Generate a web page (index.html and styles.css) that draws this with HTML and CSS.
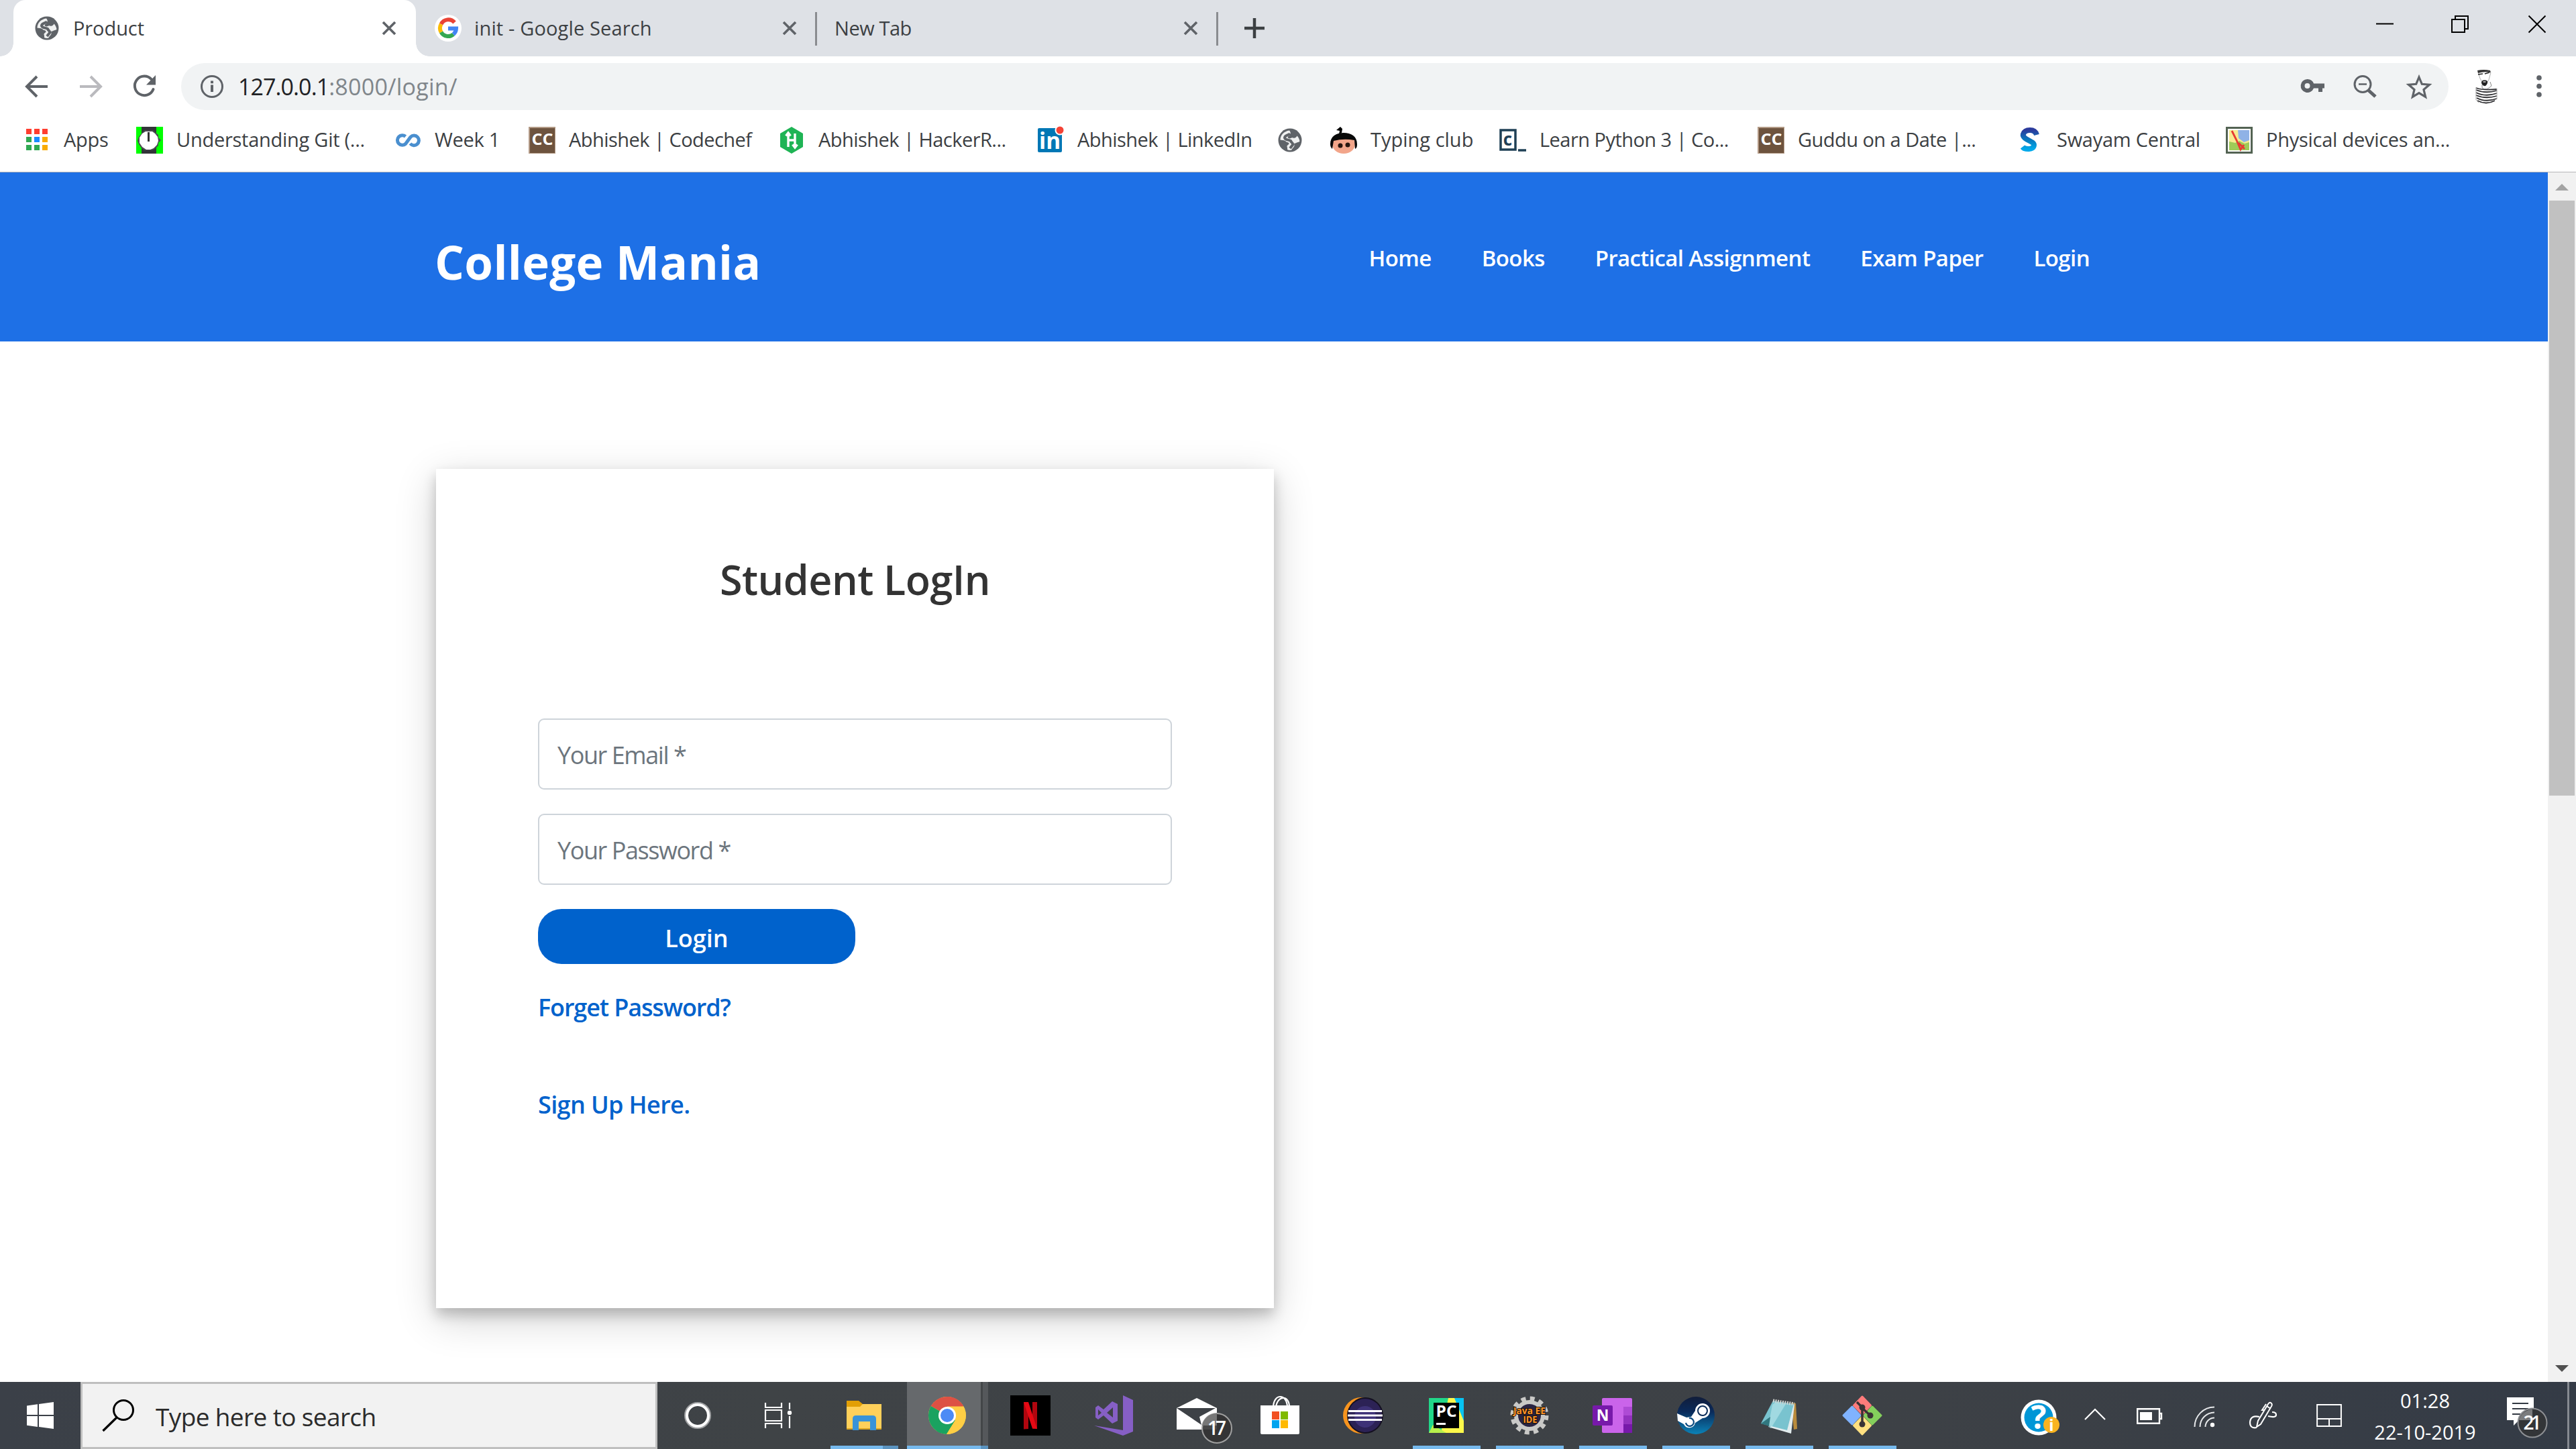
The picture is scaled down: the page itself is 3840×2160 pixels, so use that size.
FILE: index.html
```html
<!DOCTYPE html>
<html lang="en">
<head>
<meta charset="utf-8">
<title>Product</title>
<link rel="stylesheet" href="styles.css">
</head>
<body>
<svg class="defs" width="0" height="0" aria-hidden="true">
  <defs>
    <symbol id="globe" viewBox="0 0 36 36">
      <circle cx="18" cy="18" r="17.500" fill="#5f6368"/>
      <path d="M17 3.500c-8 1-13.500 7-13.500 14 3 1 6 0 8 2 1 2 4 1 5 3 0 3-3 2-3 5 1 2 0 4 1 5 2 .5 5 .5 6 0 1-3 4-4 4-7-1-3 0-3 2-3 2-2 5-1 6-3-1-4-2-6-4-8-1 2-3 4-6 3-2-1-4 1-5 1-3 0-4-3-1-4 3-2 3-5 .500-8z" fill="#fff" fill-opacity=".9"/>
      <path d="M18 8c-2 3-7 2-8 6 0 4 6 3 9 5 1 3 4 3 3 6l-4 5" fill="none" stroke="#5f6368" stroke-width="4"/>
    </symbol>
    <symbol id="cross" viewBox="0 0 24 24"><path d="M3 3l18 18M21 3L3 21" stroke="#5f6368" stroke-width="3.600" fill="none"/></symbol>
    <symbol id="cc" viewBox="0 0 40 40">
      <rect width="40" height="40" fill="#b39a86"/><rect x="2" y="2" width="37" height="37" fill="#6d533e"/>
      <text x="20.500" y="27" text-anchor="middle" font-size="24" font-weight="700" textLength="32" lengthAdjust="spacingAndGlyphs" fill="#fff">CC</text>
    </symbol>
  </defs>
</svg>

<header class="tabs">
  <div class="tab tab-active">
    <svg class="fav" width="36" height="36"><use href="#globe"/></svg>
    <span class="tab-title">Product</span>
    <svg class="close" width="24" height="24"><use href="#cross"/></svg>
  </div>
  <div class="tab tab-google">
    <svg class="fav" width="40" height="40" viewBox="0 0 40 40"><circle cx="20" cy="20" r="20" fill="#fff"/>
      <g fill="none" stroke-width="6"><path d="M29.500 11.500A12 12 0 0 0 9.600 14" stroke="#ea4335"/><path d="M9.600 14a12 12 0 0 0 0 12" stroke="#fbbc05"/><path d="M9.600 26a12 12 0 0 0 18.200 3.200" stroke="#34a853"/><path d="M27.800 29.200A12 12 0 0 0 32 20.500H20" stroke="#4285f4"/></g></svg>
    <span class="tab-title">init - Google Search</span>
    <svg class="close" width="24" height="24"><use href="#cross"/></svg>
  </div>
  <div class="tab tab-new">
    <span class="tab-title">New Tab</span>
    <svg class="close" width="24" height="24"><use href="#cross"/></svg>
  </div>
  <svg class="plus" width="32" height="32" viewBox="0 0 32 32"><path d="M16 1v30M1 16h30" stroke="#3c4043" stroke-width="4.500"/></svg>
  <div class="window-buttons">
    <svg width="26" height="26" viewBox="0 0 26 26"><path d="M0 12.500h26" stroke="#000" stroke-width="2"/></svg>
    <svg width="26" height="26" viewBox="0 0 26 26"><path d="M1 6h19v19H1zM6 6V1h19v19h-5" stroke="#000" stroke-width="2" fill="none"/></svg>
    <svg width="26" height="26" viewBox="0 0 26 26"><path d="M.500.500l25 25M25.500.500l-25 25" stroke="#000" stroke-width="2"/></svg>
  </div>
</header>

<div class="toolbar">
  <svg width="36" height="36" viewBox="0 0 36 36"><path d="M34 18H4M18 3L3 18l15 15" fill="none" stroke="#5f6368" stroke-width="4"/></svg>
  <svg width="36" height="36" viewBox="0 0 36 36"><path d="M2 18h30M18 3l15 15-15 15" fill="none" stroke="#bababe" stroke-width="4"/></svg>
  <svg width="36" height="36" viewBox="0 0 36 36"><path d="M29 7.500A14.300 14.300 0 1 0 31.500 22" fill="none" stroke="#5f6368" stroke-width="4" stroke-linecap="round"/><path d="M35 1v14.500H21z" fill="#5f6368"/></svg>
  <div class="omnibox">
    <svg width="36" height="36" viewBox="0 0 36 36"><circle cx="18" cy="18" r="15.500" fill="none" stroke="#5f6368" stroke-width="3"/><path d="M18 15.500v10.500M18 9.500v3.800" stroke="#5f6368" stroke-width="4"/></svg>
    <span class="url"><span class="host">127.0.0.1</span><span>:8000/login/</span></span>
    <div class="omni-icons">
      <svg width="36" height="36" viewBox="0 0 36 36"><path fill="#5f6368" fill-rule="evenodd" d="M10.500 7a10 10 0 1 0 9.500 13.500H27V26h6v-5.500h3V13.500H20A10 10 0 0 0 10.500 7zm0 6a4 4 0 1 1 0 8 4 4 0 0 1 0-8z"/></svg>
      <svg width="36" height="36" viewBox="0 0 36 36"><circle cx="14" cy="14.500" r="12" fill="none" stroke="#5f6368" stroke-width="3"/><path d="M8 14.500h12" stroke="#5f6368" stroke-width="2.500"/><path d="M22.500 23.500l10.500 9.500" stroke="#5f6368" stroke-width="5"/></svg>
      <svg width="38" height="36" viewBox="0 0 38 36"><path d="M19 4l4.300 10.300 11.200.9-8.500 7.300 2.600 10.900L19 27.600l-9.600 5.800L12 22.500l-8.500-7.300 11.200-.9z" fill="none" stroke="#5f6368" stroke-width="3.200"/></svg>
    </div>
  </div>
  <svg class="avatar" width="36" height="52" viewBox="0 0 36 52">
    <path d="M5 4l3 10 4 7q2 3 5 1l4-6 3-11" fill="#fff" stroke="#999" stroke-width=".8"/>
    <path d="M4 2q9-2 19 0l1 3q-10-2-19 1z" fill="#333"/>
    <path d="M5 8l7-1M15 7l7-2" stroke="#222" stroke-width="1.600"/>
    <path d="M10 21q0-5 4.500-4.500Q20 16 19 21q-2 5-5 4-3-1-4-4z" fill="#222"/><path d="M12.500 19h4" stroke="#ddd" stroke-width="1.500"/>
    <path d="M11 23v5q6 5 14-3l-2-6" fill="none" stroke="#888"/>
    <path d="M2 28q10 4 31 2M2 31q14 6 31 1M2 35q14 7 31 1M2 39q14 6 31 1M3 43q13 7 30 1M4 47q13 7 26 0" fill="none" stroke="#303033" stroke-width="1.800"/>
    <path d="M2 27v19l4 4M33 29v16" fill="none" stroke="#aaa"/>
  </svg>
  <svg class="dots" width="10" height="36" viewBox="0 0 10 36"><g fill="#5f6368"><circle cx="5" cy="5" r="3.800"/><circle cx="5" cy="17.500" r="3.800"/><circle cx="5" cy="30" r="3.800"/></g></svg>
</div>

<nav class="bookmarks">
  <a><svg width="40" height="40" viewBox="0 0 40 40"><path fill="#ff3e30" d="M4 3h8v8H4zM16 3h8v8h-8zM28 3h8v8h-8z"/><path fill="#30a952" d="M4 15h8v8H4zM4 27h8v8H4zM16 27h8v8h-8z"/><path fill="#1a8cff" d="M16 15h8v8h-8z"/><path fill="#f9ab00" d="M28 15h8v8h-8zM28 27h8v8h-8z"/></svg><span>Apps</span></a>
  <a><svg width="40" height="40" viewBox="0 0 40 40"><rect width="40" height="40" fill="#0f0"/><path d="M8 0h22v40H8z" fill="#333539"/><path d="M13 5h12l3 3 5 4v4l4 4-4 4v4l-5 5-4 2H12l-4-3-4-6-2-5 2-6 4-5z" fill="#4a4b50"/><path d="M14 7h10l4 3 4 5 1 6-2 6-5 5-5 2h-6l-6-4-4-6V16l4-6z" fill="#fff"/><path d="M18.500 8v14" stroke="#333" stroke-width="3"/></svg><span>Understanding Git (...</span></a>
  <a><svg width="40" height="40" viewBox="0 0 40 40"><path d="M16.500 14.500A7.300 7.300 0 1 0 16.500 25.500L24 15.200A7.300 7.300 0 1 1 23.500 25" fill="none" stroke="#4a8fcf" stroke-width="5"/></svg><span>Week 1</span></a>
  <a class="tight"><svg width="40" height="40"><use href="#cc"/></svg><span>Abhishek | Codechef</span></a>
  <a class="tight"><svg width="40" height="40" viewBox="0 0 40 40"><path d="M20 0l17 10v20L20 40 3 30V10z" fill="#1fb455"/><path d="M15 10v20M25 10v20M15 20h10M11.500 13.500L15 9l3.500 4.500M21.500 26.500L25 31l3.500-4.500" fill="none" stroke="#fff" stroke-width="3.400"/></svg><span>Abhishek | HackerR...</span></a>
  <a class="tight"><svg width="40" height="40" viewBox="0 0 40 40"><rect x="1" y="2" width="36" height="36" rx="2" fill="#0077b5"/><text x="19" y="33" text-anchor="middle" font-size="34" font-weight="700" fill="#fff" textLength="32" lengthAdjust="spacingAndGlyphs">in</text><circle cx="34" cy="5" r="7.500" fill="#fff"/><circle cx="34" cy="5" r="5.500" fill="#f44336"/></svg><span>Abhishek | LinkedIn</span></a>
  <a><svg width="40" height="40" viewBox="0 0 40 40"><use href="#globe" x="2" y="2" width="36" height="36"/></svg></a>
  <a class="loose"><svg width="40" height="40" viewBox="0 0 40 40"><path d="M13 11l1-5-5-1 6-5 3 3-1 6z" fill="#000"/><ellipse cx="20" cy="26" rx="17" ry="14" fill="#f2a58a"/><path d="M0 26C0 14 9 9 20 9s20 5 20 17c0 4-1 6-3 7l-1-13q-16-3-31 1L3 33C1 31 0 29 0 26z" fill="#090909"/><circle cx="15" cy="28" r="3.500" fill="#27150f"/><circle cx="26" cy="27" r="3.500" fill="#27150f"/></svg><span>Typing club</span></a>
  <a class="tight"><svg width="40" height="40" viewBox="0 0 40 40"><path d="M2 5h22v29H2z" fill="#fff" stroke="#1f4056" stroke-width="3.500"/><path d="M28 35h12" stroke="#1f4056" stroke-width="3.500"/><text x="12.500" y="28" text-anchor="middle" font-size="26" font-weight="700" fill="#1f4056">c</text></svg><span>Learn Python 3 | Co...</span></a>
  <a class="tight"><svg width="40" height="40"><use href="#cc"/></svg><span>Guddu on a Date |...</span></a>
  <a><svg width="40" height="40" viewBox="0 0 40 40"><defs><linearGradient id="sw" x1="0" y1="0" x2="0" y2="1"><stop offset="0" stop-color="#2b3b9c"/><stop offset=".5" stop-color="#0a78bd"/><stop offset="1" stop-color="#00a9ea"/></linearGradient></defs><path d="M30 12Q28 5 20 5 12 5 10 11c-2 8 16 10 16 16 0 8-14 7-17 3" fill="none" stroke="url(#sw)" stroke-width="8"/></svg><span>Swayam Central</span></a>
  <a><svg width="40" height="40" viewBox="0 0 40 40"><rect width="40" height="40" fill="#536353"/><rect x="3" y="3" width="34" height="34" fill="#fff"/><rect x="5" y="5" width="30" height="30" fill="#f7eb91"/><path d="M18 5h17v15l-8 3-8-6z" fill="#8fb2e6"/><path d="M5 22l9 2 6-3 8 4 7-2v12H5z" fill="#9fcb58"/><path d="M9 6l7 14 6 14 5-7M19 24l9 9" fill="none" stroke="#e83b32" stroke-width="2.800"/></svg><span>Physical devices an...</span></a>
</nav>

<div class="viewport">
  <div class="page">
    <header class="site-header">
      <h1>College Mania</h1>
      <nav class="site-nav">
        <a>Home</a><a>Books</a><a>Practical Assignment</a><a>Exam Paper</a><a>Login</a>
      </nav>
    </header>
    <main class="card">
      <h2>Student LogIn</h2>
      <div class="field"><span>Your Email *</span></div>
      <div class="field"><span>Your Password *</span></div>
      <button class="login" type="button">Login</button>
      <a class="link forgot">Forget Password?</a>
      <a class="link signup">Sign Up Here.</a>
    </main>
  </div>
  <div class="scrollbar">
    <svg width="20" height="10" viewBox="0 0 20 10"><path d="M0 10L10 0l10 10z" fill="#a3a3a3"/></svg>
    <div class="thumb"></div>
    <svg class="down" width="20" height="10" viewBox="0 0 20 10"><path d="M0 0l10 10L20 0z" fill="#505050"/></svg>
  </div>
</div>

<footer class="taskbar">
  <div class="start"><svg width="40" height="40" viewBox="0 0 40 40"><path d="M0 5.500L16 3.200V19H0zM18 2.900L40 0v19H18zM0 21h16v16L0 34.700zM18 21h22v19l-22-3z" fill="#fff"/></svg></div>
  <div class="search">
    <svg width="48" height="48" viewBox="0 0 48 48"><circle cx="32" cy="16" r="14.500" fill="none" stroke="#000" stroke-width="3"/><path d="M22 27L1.500 47" stroke="#000" stroke-width="3.200"/></svg>
    <span>Type here to search</span>
  </div>
  <div class="apps">
    <div class="app"><svg width="40" height="40" viewBox="0 0 40 40"><circle cx="20" cy="20" r="17" fill="none" stroke="#a0a2a4" stroke-width="6"/><circle cx="20" cy="20" r="16" fill="none" stroke="#fff" stroke-width="4"/></svg></div>
    <div class="app"><svg width="42" height="40" viewBox="0 0 42 40"><path d="M2 1v7h24V1M2 39v-7h24v7M2 12h24v16H2zM38 1v10M38 21v18" fill="none" stroke="#fff" stroke-width="2.200"/><circle cx="38" cy="16" r="3.200" fill="#fff"/></svg></div>
    <div class="app open explorer"><svg width="60" height="60" viewBox="0 0 60 60"><path d="M4 8h18l6 5v11H4z" fill="#e29f05"/><path d="M4 17h20l4-4h28v37H4z" fill="#ffd05a"/><path d="M4 50h52" stroke="#dba421" stroke-width="2"/><path d="M13 52V35q0-5 5-5h25q5 0 5 5v17h-9V39H22v13z" fill="#3993d8"/></svg></div>
    <div class="app open current"><svg width="60" height="60" viewBox="0 0 60 60"><circle cx="30" cy="30" r="28" fill="#ffce44"/><path d="M30 30L5.750 16A28 28 0 0 1 54.250 16z" fill="#dd5144"/><path d="M30 2a28 28 0 0 1 24.250 14.500H30z" fill="#dd5144"/><path d="M5.750 16A28 28 0 0 0 29 58l13-21-12-7z" fill="#1aa260"/><path d="M54.250 16.500H30L42 37 29 58A28 28 0 0 0 54.250 16.500z" fill="#ffce44"/><circle cx="30" cy="30" r="13" fill="#fff"/><circle cx="30" cy="30" r="10" fill="#4c8bf5"/></svg></div>
    <div class="app"><svg width="60" height="60" viewBox="0 0 60 60"><rect width="60" height="60"/><path d="M20 10h7v40l-7 .5zM33 10h7v40l-7-.5z" fill="#b1060f"/><path d="M20 10h7l13 40-7-.5z" fill="#e50914"/></svg></div>
    <div class="app"><svg width="60" height="60" viewBox="0 0 60 60"><path d="M44 0l15 7v47l-15 6L1 45l43 7z" fill="#865fc5"/><path fill-rule="evenodd" d="M28 9l8 4v25l-8 4-13-12-8 6-4-3V18l4-3 8 6zM29 18l-9 8 9 7zM7 21v9l5-4z" fill="#865fc5"/></svg></div>
    <div class="app"><svg width="90" height="90" viewBox="0 0 90 90"><path d="M15 34L45 19l30 15v32H15z" fill="#fff"/><path d="M15 34h58L49 47l3 12z" fill="#3d4146"/><circle cx="75" cy="64" r="22" fill="#333" fill-opacity=".9" stroke="#a0a0a0" stroke-width="2"/><path d="M53 60a22 22 0 0 1 22-18v18z" fill="#777"/><text x="75" y="74" text-anchor="middle" font-size="28" font-weight="600" fill="#fff" textLength="28">17</text></svg></div>
    <div class="app"><svg width="60" height="60" viewBox="0 0 60 60"><path d="M20 17C21-3 40-3 41 17M24 17C27-1 44 0 44 17" fill="none" stroke="#fff" stroke-width="2.200"/><path d="M1 15h58v41q0 2-2 2H3q-2 0-2-2z" fill="#fff"/><path fill="#f25022" d="M18 24h11v12H18z"/><path fill="#7fba00" d="M31 24h11v12H31z"/><path fill="#00a4ef" d="M18 37h11v12H18z"/><path fill="#ffb900" d="M31 37h11v12H31z"/></svg></div>
    <div class="app"><svg width="60" height="60" viewBox="0 0 60 60"><ellipse cx="27" cy="30" rx="27" ry="27" fill="#f7941e"/><circle cx="33" cy="30" r="27" fill="#141020"/><circle cx="33" cy="30" r="25" fill="#2c2255"/><circle cx="33" cy="32" r="16" fill="#3e3277"/><path d="M8 23.500h50M7 30h52M8 36.500h50" stroke="#fff" stroke-width="3.200"/></svg></div>
    <div class="app open"><svg width="60" height="60" viewBox="0 0 60 60"><path d="M4 4h52v52H4z" fill="#21d789"/><path d="M33 4h23v52H22z" fill="#fcf84a"/><path d="M42 4h14v34z" fill="#07c3f2"/><path d="M4 56l6-12 20 12z" fill="#b8ef4c"/><path d="M11 11h38v38H11z"/><path d="M15 42.500h14" stroke="#fff" stroke-width="3"/><text x="30" y="32" text-anchor="middle" font-size="23" font-weight="700" fill="#fff" textLength="31" lengthAdjust="spacingAndGlyphs">PC</text></svg></div>
    <div class="app open"><svg width="60" height="60" viewBox="0 0 60 60"><circle cx="30" cy="30" r="25" fill="none" stroke="#c9c9c7" stroke-width="7" stroke-dasharray="6.800 6.290"/><circle cx="30" cy="30" r="20" fill="#292443" stroke="#c9c9c7" stroke-width="6"/><g fill="#ff9427" stroke="#1a120a" stroke-width="2" paint-order="stroke" font-size="14" font-weight="700" text-anchor="middle"><text x="30" y="28" textLength="48" lengthAdjust="spacingAndGlyphs">Java EE</text><text x="31" y="41" textLength="21" lengthAdjust="spacingAndGlyphs">IDE</text></g></svg></div>
    <div class="app open"><svg width="60" height="60" viewBox="0 0 60 60"><rect x="14" y="4" width="45" height="52" rx="2" fill="#ca64ea"/><path d="M46 17h13v13H46z" fill="#ae4bd5"/><path d="M46 30h13v13H46z" fill="#9332bf"/><path d="M46 43h13v13H46z" fill="#7719aa"/><rect x="0" y="15" width="30" height="30" rx="2" fill="#7719aa"/><text x="15" y="38" text-anchor="middle" font-size="23" font-weight="700" fill="#fff">N</text></svg></div>
    <div class="app open"><svg width="60" height="60" viewBox="0 0 60 60"><defs><linearGradient id="st" x1="0" y1="0" x2="0" y2="1"><stop offset="0" stop-color="#111d3a"/><stop offset=".4" stop-color="#0a2a5a"/><stop offset="1" stop-color="#0b83b8"/></linearGradient></defs><circle cx="30" cy="30" r="28" fill="url(#st)"/><path d="M2 27l14 6 7-1 6-9a11 11 0 1 1 11 11l-11 7a9 9 0 0 1-17 2L3 38z" fill="#fff"/><circle cx="40" cy="23" r="7" fill="none" stroke="#0b2c58" stroke-width="2"/><path d="M15 41a6 6 0 1 0 5-7" fill="none" stroke="#0b4b80" stroke-width="2.200"/></svg></div>
    <div class="app open"><svg width="60" height="60" viewBox="0 0 60 60"><path d="M48 11l7 1 2 38-5 1z" fill="#b98b3c"/><path d="M21 9l32 5-5 43-31-9z" fill="#e2ecee"/><path d="M21 8l31 5-10 39-39-10z" fill="#79c3cf"/><path d="M20 14l5-4 15 3-22 36-4-2z" fill="#b2e3e8" fill-opacity=".7"/><path d="M3 42l14-10-2 14z" fill="#31777f"/><path d="M21 8l32 5" stroke="#cfd3d1" stroke-width="5" stroke-dasharray="2 1.500"/></svg></div>
    <div class="app open"><svg width="60" height="60" viewBox="0 0 60 60"><g stroke-linejoin="round" stroke-width="3"><path d="M30 2l12.500 13L30 28 17.500 15z" fill="#ff7b7b" stroke="#ff7b7b"/><path d="M45 17l13 13-13 13-12-13z" fill="#84cf5c" stroke="#84cf5c"/><path d="M15 17l12 13-12 13L2 30z" fill="#80b3ff" stroke="#80b3ff"/><path d="M30 32l12.500 13L30 58 17.500 45z" fill="#ffe080" stroke="#ffe080"/></g><path d="M22 10l8 8v24M30 19l12 11" stroke="#3a3335" stroke-width="3.500" fill="none"/><g fill="#3a3335"><circle cx="30" cy="18" r="4.500"/><circle cx="42" cy="30" r="4.500"/><circle cx="30" cy="43" r="4.500"/></g></svg></div>
  </div>
  <div class="tray">
    <div class="cell help"><svg width="62" height="56" viewBox="0 0 62 56"><circle cx="29" cy="28" r="26.500" fill="#fff"/><circle cx="29" cy="28" r="21.500" fill="#0096d6"/><text x="29" y="45" text-anchor="middle" font-size="48" font-weight="700" fill="#fff">?</text><circle cx="48" cy="39" r="12" fill="#f9b320"/><text x="48" y="48" text-anchor="middle" font-size="24" font-weight="700" fill="#fff">i</text></svg></div>
    <div class="cell chevron"><svg width="32" height="18" viewBox="0 0 32 18"><path d="M1 17L16 2l15 15" fill="none" stroke="#fff" stroke-width="2.200"/></svg></div>
    <div class="cell battery"><svg width="38" height="24" viewBox="0 0 38 24"><path d="M1.200 1.200H34v21.600H1.200zM34 8h3v8h-3" fill="none" stroke="#fff" stroke-width="2.400"/><path d="M5 6h18v12H5z" fill="#fff"/></svg></div>
    <div class="cell wifi"><svg width="32" height="32" viewBox="0 0 32 32"><path d="M1.500 31A29.500 29.500 0 0 1 31 1.500M9.500 31A21.500 21.500 0 0 1 31 9.500M17.500 31A13.500 13.500 0 0 1 31 17.500" fill="none" stroke="#e6e8ea" stroke-width="2"/><circle cx="28" cy="28" r="3.200" fill="#fff"/></svg></div>
    <div class="cell pen"><svg width="42" height="42" viewBox="0 0 42 42"><path d="M12 38l2-9L29 4q3-4 5-1 2 2-1 6L18 34zM27 7l6 4M23 13l-3 0 6-9" fill="none" stroke="#fff" stroke-width="2"/><path d="M16 23Q3 20 2 31q0 10 10 8M29 22q12 3 12-2 0-4-6-4" fill="none" stroke="#fff" stroke-width="2.200"/></svg></div>
    <div class="cell pad"><svg width="38" height="34" viewBox="0 0 38 34"><path d="M1.100 1.100h35.800v31.800H1.100zM1 22h36M19 22v11" fill="none" stroke="#fff" stroke-width="2"/></svg></div>
    <div class="cell clock"><span>01:28</span><span>22-10-2019</span></div>
    <div class="cell action"><svg width="66" height="66" viewBox="0 0 66 66"><path d="M4 6h40v34H22l-8 8v-8H4z" fill="#fff"/><path d="M12 15h24M12 23h24M12 31h16" stroke="#333942" stroke-width="2.200"/><circle cx="42" cy="44" r="21.500" fill="#333538" stroke="#8e9094" stroke-width="2"/><path d="M22 40a21 21 0 0 1 20-16v16z" fill="#7b7c7e"/><text x="42" y="54" text-anchor="middle" font-size="28" font-weight="600" fill="#fff" textLength="27">21</text></svg></div>
    <div class="desktop-edge"></div>
  </div>
</footer>
</body>
</html>
```
FILE: styles.css
```css
* { box-sizing: border-box; }

body {
  margin: 0;
  height: 2160px;
  overflow: hidden;
  display: flex;
  flex-direction: column;
  background: #fff;
  font-family: "Open Sans", "Noto Sans", sans-serif;
  color: #3c4043;
}
svg { display: block; flex: none; overflow: visible; letter-spacing: 0; }
.defs { position: absolute; }
span, a, h1 { white-space: nowrap; }

/* tab strip */
.tabs {
  height: 84px;
  flex: none;
  display: flex;
  align-items: center;
  background: #dee1e6;
  padding-left: 20px;
  font-size: 29px;
}
.tab { height: 84px; display: flex; align-items: center; position: relative; }
.tab-title { padding-bottom: 2px; }
.tab .close { margin-left: auto; }
.tab-active { width: 600px; padding: 0 28px 0 32px; background: #fff; border-radius: 18px 18px 0 0; letter-spacing: -.003em; }
.tab-active .tab-title { margin-left: 21px; }
.tab-active::before, .tab-active::after {
  content: ""; position: absolute; bottom: 0; width: 20px; height: 20px;
}
.tab-active::before { left: -20px; background: radial-gradient(circle at 0 0, transparent 19.500px, #fff 20px); }
.tab-active::after { right: -20px; background: radial-gradient(circle at 100% 0, transparent 19.500px, #fff 20px); }
.tab-google { width: 598px; padding: 0 29px 0 28px; letter-spacing: .005em; }
.tab-google .tab-title { margin-left: 19px; }
.tab-new { width: 598px; padding: 0 29px 0 26px; letter-spacing: -.015em; }
.tab-google::after, .tab-new::after {
  content: ""; position: absolute; right: 0; top: 18px; width: 3px; height: 50px; background: #8a8c90;
}
.plus { margin-left: 38px; }
.window-buttons { margin-left: auto; display: flex; padding: 0 45px 13px 0; }
.window-buttons svg:nth-child(2) { margin: 0 89px 0 86px; }

/* toolbar */
.toolbar { height: 90px; flex: none; display: flex; align-items: center; padding-left: 37px; background: #fff; }
.toolbar > svg { margin-right: 44px; }
.omnibox {
  width: 3380px; height: 70px; border-radius: 35px; background: #f1f3f4;
  display: flex; align-items: center; padding: 0 25px 0 28px; margin-left: -7px;
}
.url { font-size: 34px; margin-left: 21px; color: #80868b; letter-spacing: .007em; }
.host { color: #202124; letter-spacing: -.027em; }
.omni-icons { display: flex; gap: 43px; margin-left: auto; }
.toolbar > .avatar { margin: 0 0 0 39px; }
.toolbar > .dots { margin: 0 0 0 55px; }

/* bookmarks */
.bookmarks {
  height: 83px; flex: none; display: grid; padding: 0 0 12px 35px;
  grid-template-columns: 168px 385px 200px 372px 386px 357px 80px 252px 385px 386px 312px 380px;
  align-items: center; font-size: 29px; letter-spacing: -.009em; border-bottom: 1px solid #b5b6b8;
}
.bookmarks a { display: flex; align-items: center; gap: 20px; }
.bookmarks a span { padding-bottom: 4px; }
.bookmarks .tight { letter-spacing: -.0185em; }
.bookmarks .loose { letter-spacing: 0; }

/* page */
.viewport { height: 1803px; flex: none; display: flex; }
.page { flex: 1; }
.site-header { height: 252px; background: #1e70e6; color: #fff; display: flex; justify-content: space-between; padding: 0 683px 0 648px; }
h1 { margin: 93px 0 0; font-size: 69px; line-height: 80px; font-weight: 700; letter-spacing: .005em; }
.site-nav { display: flex; gap: 75px; margin-top: 104px; font-size: 33px; line-height: 48px; font-weight: 600; letter-spacing: -.018em; }
.card {
  width: 1249px; height: 1251px; margin: 190px 0 0 650px; padding: 123px 152px 0;
  box-shadow: 0 10px 18px rgba(0,0,0,.2), 0 16px 56px rgba(0,0,0,.19);
}
h2 { margin: 0 0 165px; font-size: 61px; line-height: 84px; font-weight: 600; letter-spacing: -.0085em; color: #333; text-align: center; }
.field {
  height: 106px; margin-bottom: 36px; padding: 3px 0 0 27px; display: flex; align-items: center;
  border: 2px solid #ced4da; border-radius: 9px; font-size: 36px; letter-spacing: -.04em; color: #6c757d;
}
.login {
  display: flex; align-items: center; justify-content: center; width: 473px; height: 82px; padding: 4px 0 0;
  border: 0; border-radius: 35px; background: #0062cc; color: #fff; font: 600 36px "Open Sans", sans-serif;
}
.link { display: block; font-size: 36px; line-height: 54px; font-weight: 600; color: #0062cc; }
.forgot { margin-top: 38px; letter-spacing: -.031em; }
.signup { margin-top: 91px; letter-spacing: -.017em; }
.scrollbar { width: 42px; background: #f1f1f1; display: flex; flex-direction: column; align-items: center; padding: 17px 0 15px; }
.thumb { width: 38px; height: 887px; margin-top: 15px; background: #c1c1c1; }
.scrollbar .down { margin-top: auto; }

/* taskbar */
.taskbar { height: 100px; flex: none; display: flex; background: linear-gradient(90deg, #3b4048, #3f4346 30%, #3d4146 75%, #343b46); }
.start { width: 120px; display: flex; align-items: center; justify-content: center; }
.search { width: 860px; border: 3px solid #bfbfbf; background: #f2f2f2; display: flex; align-items: center; padding-left: 29px; font-size: 37px; letter-spacing: -.017em; color: #2b2b2b; }
.search span { margin-left: 32px; padding-top: 3px; }
.apps { display: grid; grid-template-columns: 120px 126px repeat(13, 124px); }
.app { display: flex; align-items: center; justify-content: center; position: relative; }
.app:nth-child(2) { padding-right: 6px; }
.open::after { content: ""; position: absolute; left: 12px; bottom: 0; width: 101px; height: 5px; background: #76b9ed; }
.explorer::after { background: linear-gradient(90deg, #76b9ed 78px, #5b93bf 78px); }
.current { background: linear-gradient(90deg, transparent 2px, #66696c 2px 112px, #434648 112px 115px, #55585b 115px 123px, transparent 123px); }
.current::after { left: 2px; width: 121px; background: linear-gradient(90deg, #76b9ed 110px, #5b93bf 110px); }
.tray { display: flex; margin-left: auto; color: #fff; }
.cell { display: flex; align-items: center; justify-content: center; }
.help { width: 82px; padding-top: 6px; }
.chevron { width: 82px; padding-bottom: 4px; }
.battery { width: 80px; padding-top: 2px; }
.wifi { width: 84px; padding-top: 4px; }
.pen { width: 90px; }
.pad { width: 108px; }
.clock { width: 178px; flex-direction: column; font-size: 29px; line-height: 47px; padding-top: 2px; }
.action { width: 123px; }
.desktop-edge { width: 13px; border-left: 3px solid #858a91; }
```
